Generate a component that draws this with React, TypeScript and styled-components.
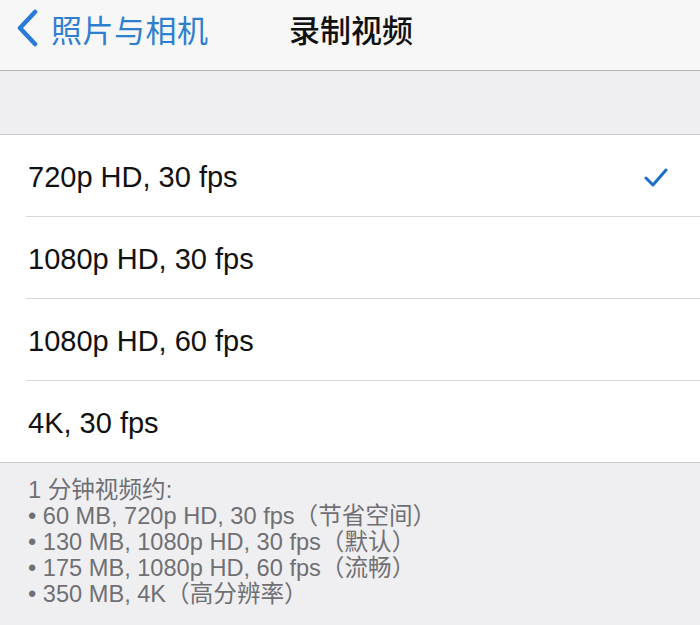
import React from "react";
import styled, { createGlobalStyle } from "styled-components";

const Global = createGlobalStyle`
  html, body { margin: 0; padding: 0; background: #efeff1; }
  body { font-family: "Liberation Sans", "Noto Sans CJK SC", sans-serif; -webkit-font-smoothing: antialiased; }
`;

const Page = styled.div`
  width: 700px;
  height: 625px;
  overflow: hidden;
  background: #efeff1;
  display: flex;
  flex-direction: column;
`;

const NavBar = styled.header`
  height: 70px;
  background: #f7f7f8;
  border-bottom: 1px solid #b4b4b6;
  display: grid;
  grid-template-columns: 1fr auto 1fr;
  align-items: center;
  box-sizing: content-box;
`;

const Back = styled.div`
  display: flex;
  align-items: center;
  gap: 12px;
  padding-left: 15px;
  color: #2f7fd0;
  font-family: "Noto Sans CJK SC", sans-serif;
  font-size: 31px;
  line-height: 1;
  margin-top: -14px;
`;

const BackLabel = styled.span`
  letter-spacing: 0.5px;
`;

const Title = styled.div`
  font-family: "Noto Sans CJK SC", sans-serif;
  font-size: 31px;
  font-weight: 500;
  color: #111;
  line-height: 1;
  margin-top: -14px;
  margin-left: 2px;
`;

const Spacer = styled.div`
  height: 63px;
  border-bottom: 1px solid #c8c7cc;
  box-sizing: content-box;
`;

const List = styled.div`
  background: #fff;
  border-bottom: 1px solid #c8c7cc;
`;

const Row = styled.div<{ $last?: boolean }>`
  height: ${(p) => (p.$last ? "81px" : "82px")};
  box-sizing: border-box;
  padding: 3px 32px 0 28px;
  display: flex;
  align-items: center;
  justify-content: space-between;
  font-size: 29px;
  color: #111;
  position: relative;
  border-bottom: ${(p) => (p.$last ? "none" : "1px solid transparent")};
  &::after {
    content: "";
    display: ${(p) => (p.$last ? "none" : "block")};
    position: absolute;
    left: 26px;
    right: 0;
    bottom: -1px;
    height: 1px;
    background: #d6d5da;
  }
`;

const Footer = styled.div`
  padding: 14px 28px 0;
  font-family: "Liberation Sans", "Noto Sans CJK SC", sans-serif;
  font-size: 23.6px;
  line-height: 26px;
  color: #6f6f74;
`;

const Line = styled.div`
  white-space: nowrap;
`;

const Chevron = () => (
  <svg width="24" height="38" viewBox="0 0 24 38">
    <polyline points="20,3 5,19 20,35" fill="none" stroke="#2a7bd6" strokeWidth="4.5" strokeLinecap="round" strokeLinejoin="round" />
  </svg>
);

const Check = () => (
  <svg width="24" height="20" viewBox="0 0 24 20">
    <polyline points="2,11 9,18 22,3" fill="none" stroke="#1c6fc2" strokeWidth="3" strokeLinecap="round" strokeLinejoin="round" />
  </svg>
);

const options = ["720p HD, 30 fps", "1080p HD, 30 fps", "1080p HD, 60 fps", "4K, 30 fps"];

const notes = [
  "1 分钟视频约:",
  "• 60 MB, 720p HD, 30 fps（节省空间）",
  "• 130 MB, 1080p HD, 30 fps（默认）",
  "• 175 MB, 1080p HD, 60 fps（流畅）",
  "• 350 MB, 4K（高分辨率）",
];

export default function App() {
  return (
    <Page>
      <Global />
      <NavBar>
        <Back>
          <Chevron />
          <BackLabel>照片与相机</BackLabel>
        </Back>
        <Title>录制视频</Title>
        <div />
      </NavBar>
      <Spacer />
      <List>
        {options.map((o, i) => (
          <Row key={o} $last={i === options.length - 1}>
            <span>{o}</span>
            {i === 0 && <Check />}
          </Row>
        ))}
      </List>
      <Footer>
        {notes.map((n) => (
          <Line key={n}>{n}</Line>
        ))}
      </Footer>
    </Page>
  );
}
